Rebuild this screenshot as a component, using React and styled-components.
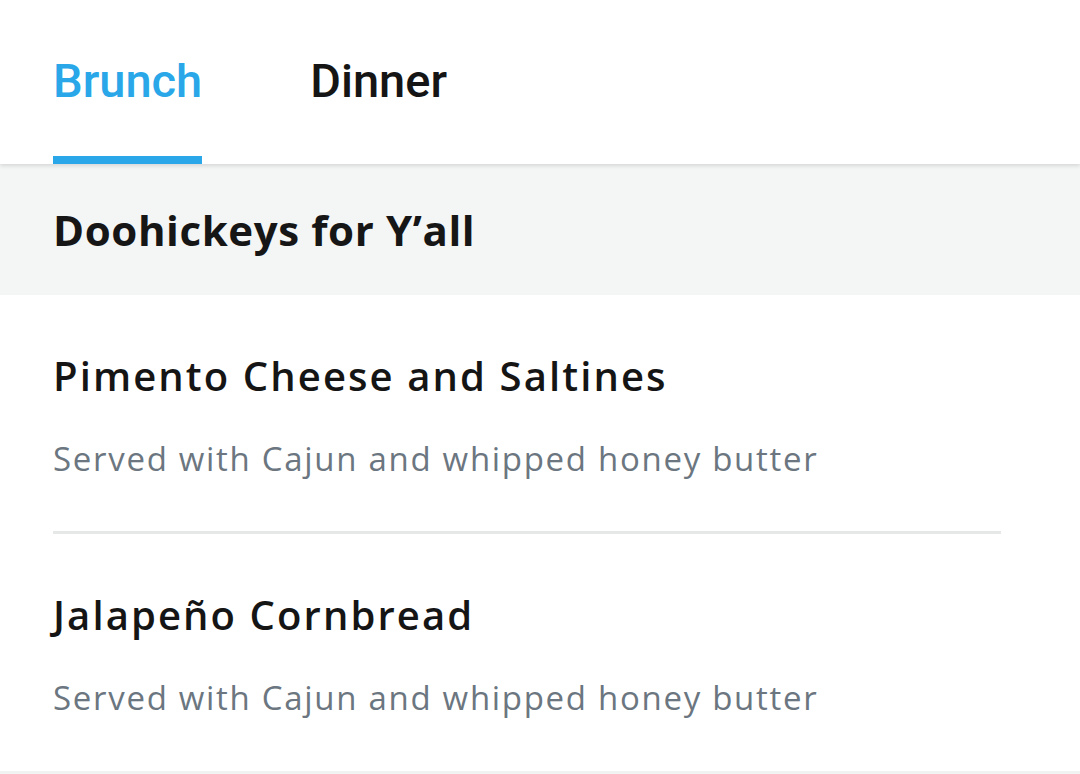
import React, { useState } from "react";
import styled, { createGlobalStyle } from "styled-components";

const Global = createGlobalStyle`
  html, body { margin: 0; padding: 0; background: #ffffff; }
  body { font-family: "Open Sans", Lato, sans-serif; -webkit-font-smoothing: antialiased; }
  * { box-sizing: border-box; }
`;

const Page = styled.div`
  width: 1080px;
  height: 774px;
  overflow: hidden;
  background: #ffffff;
  display: flex;
  flex-direction: column;
`;

const TabBar = styled.nav`
  position: relative;
  z-index: 2;
  height: 165px;
  display: flex;
  align-items: stretch;
  gap: 108px;
  padding: 0 53px;
  background: #ffffff;
  box-shadow: 0 2px 4px rgba(0, 0, 0, 0.12);
`;

const Tab = styled.button`
  border: none;
  background: none;
  padding: 51px 0 0;
  margin: 0;
  display: flex;
  flex-direction: column;
  justify-content: space-between;
  font-family: Roboto, sans-serif;
  font-weight: 500;
  font-size: 47px;
  line-height: 60px;
  color: ${(p) => (p.$active ? "#29a7e8" : "#151515")};
  cursor: pointer;
  &::after {
    content: "";
    display: block;
    height: 8px;
    background: ${(p) => (p.$active ? "#29a7e8" : "transparent")};
  }
`;

const SectionHeader = styled.h2`
  margin: 0;
  height: 131px;
  padding: 0 53px;
  background: #f4f5f5;
  font-family: "Open Sans", sans-serif;
  font-weight: 700;
  font-size: 42px;
  letter-spacing: 0.6px;
  line-height: 131px;
  color: #161616;
`;

const List = styled.ul`
  list-style: none;
  margin: 0;
  padding: 0 79px 0 53px;
  display: flex;
  flex-direction: column;
`;

const Item = styled.li`
  padding: 57px 0 52px;
  border-bottom: 3px solid #e6e7e7;
  &:last-child {
    margin: 0 -79px 0 -53px;
    padding: 57px 79px 53px 53px;
    border-bottom-color: #f1f2f2;
  }
`;

const ItemTitle = styled.div`
  font-family: "Open Sans", sans-serif;
  font-weight: 600;
  font-size: 40px;
  letter-spacing: 2.1px;
  line-height: 48px;
  color: #151515;
`;

const ItemDesc = styled.div`
  margin-top: 39px;
  font-family: "Open Sans", sans-serif;
  font-weight: 400;
  font-size: 33px;
  letter-spacing: 1.7px;
  line-height: 40px;
  color: #6b7680;
`;

const items = [
  { title: "Pimento Cheese and Saltines", desc: "Served with Cajun and whipped honey butter" },
  { title: "Jalapeño Cornbread", desc: "Served with Cajun and whipped honey butter" },
];

export default function App() {
  const [tab, setTab] = useState("Brunch");
  return (
    <Page>
      <Global />
      <TabBar>
        {["Brunch", "Dinner"].map((t) => (
          <Tab key={t} $active={tab === t} onClick={() => setTab(t)}>
            {t}
          </Tab>
        ))}
      </TabBar>
      <SectionHeader>Doohickeys for Y’all</SectionHeader>
      <List>
        {items.map((it) => (
          <Item key={it.title}>
            <ItemTitle>{it.title}</ItemTitle>
            <ItemDesc>{it.desc}</ItemDesc>
          </Item>
        ))}
      </List>
    </Page>
  );
}
